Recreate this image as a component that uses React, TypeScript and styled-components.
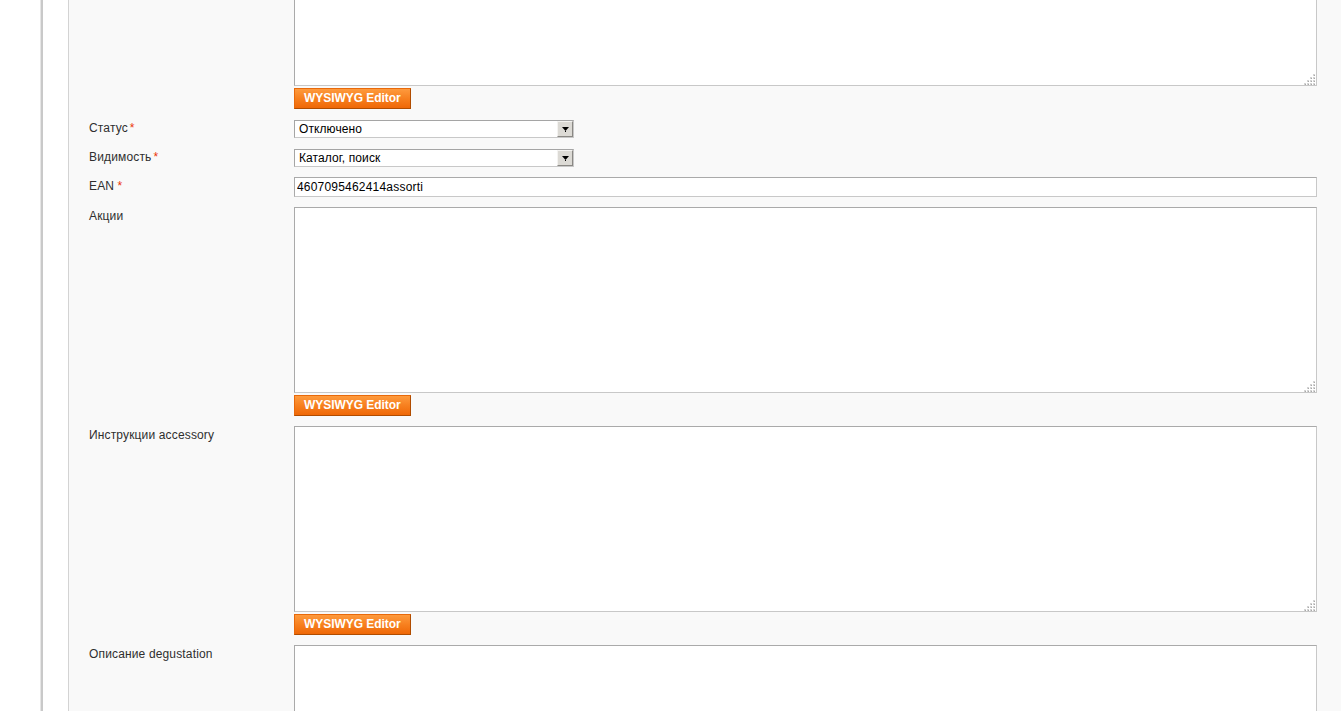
import styled, { createGlobalStyle } from 'styled-components'

const GlobalStyle = createGlobalStyle`
  html, body {
    margin: 0;
    padding: 0;
    background: #fff;
    overflow: hidden;
  }
  body {
    font: 12px/15px Arial, 'Liberation Sans', Helvetica, sans-serif;
    color: #2f2f2f;
  }
`

const Page = styled.div`
  display: flex;
  width: 1341px;
  height: 711px;
  overflow: hidden;
  background: #fff;
`

// edge of the side column on the left
const SideEdge = styled.div`
  width: 40px;
  flex: none;
  border-right: 1px solid #e6e6e6;
`

const SideRule = styled.div`
  width: 2px;
  flex: none;
  background: #c9c9c9;
`

const Gutter = styled.div`
  width: 25px;
  flex: none;
`

const Fieldset = styled.div`
  flex: 1;
  min-width: 0;
  background: #f9f9f9;
  border-left: 1px solid #d3d3d3;
  padding: 0 24px 0 20px;
`

// the first row is scrolled partly out of view
const FormList = styled.div`
  display: grid;
  grid-template-columns: 205px 1fr;
  row-gap: 10px;
  margin-top: -100px;
`

const Label = styled.div`
  padding-top: 2px;
  color: #2f2f2f;
  letter-spacing: 0.15px;
`

const Req = styled.span<{ $gap?: number }>`
  color: #eb340a;
  margin-left: ${({ $gap }) => $gap ?? 2}px;
`

const Value = styled.div`
  display: flex;
  flex-direction: column;
  align-items: flex-start;
`

const AreaWrap = styled.div`
  position: relative;
  width: 100%;
`

const TextArea = styled.textarea`
  display: block;
  box-sizing: border-box;
  width: 100%;
  height: 186px;
  margin: 0;
  padding: 2px;
  border: 1px solid;
  border-color: #aaa #c8c8c8 #c8c8c8 #aaa;
  background: #fff;
  font: 12px Arial, 'Liberation Sans', sans-serif;
  resize: none;
  outline: none;
`

const Grip = styled.svg`
  position: absolute;
  right: 2px;
  bottom: 1px;
  pointer-events: none;
`

const WysiwygButton = styled.button`
  box-sizing: border-box;
  margin-top: 2px;
  height: 21px;
  padding: 0 9px 1px;
  border: 1px solid;
  border-color: #e8690a #b04c00 #b04c00 #e8690a;
  background: linear-gradient(#fe9a3d 0%, #f7801f 50%, #ef6807 100%);
  color: #fff;
  font: bold 12px Arial, 'Liberation Sans', sans-serif;
  letter-spacing: -0.05px;
  white-space: nowrap;
  cursor: pointer;
`

const SelectBox = styled.div<{ $width: number }>`
  box-sizing: border-box;
  display: flex;
  align-items: stretch;
  width: ${({ $width }) => $width}px;
  height: 18px;
  margin-top: 1px;
  border: 1px solid;
  border-color: #a5a5a5 #c8c8c8 #c8c8c8 #a5a5a5;
  background: #fff;
`

const SelectText = styled.div`
  flex: 1;
  padding-left: 4px;
  line-height: 16px;
  color: #000;
  letter-spacing: 0.1px;
  white-space: nowrap;
  overflow: hidden;
`

const ArrowButton = styled.div`
  box-sizing: border-box;
  width: 16px;
  flex: none;
  display: flex;
  align-items: center;
  justify-content: center;
  background: #dcdad5;
  border: 1px solid;
  border-color: #f4f3f1 #8a8884 #8a8884 #f4f3f1;
`

const TextInput = styled.input`
  box-sizing: border-box;
  display: block;
  width: 100%;
  height: 20px;
  margin: 0;
  padding: 0 2px;
  border: 1px solid;
  border-color: #aaa #c8c8c8 #c8c8c8 #aaa;
  background: #fff;
  color: #000;
  font: 12px Arial, 'Liberation Sans', sans-serif;
  letter-spacing: 0.2px;
  outline: none;
`

const DownArrow = () => (
  <svg width="7" height="5" viewBox="0 0 7 5">
    <polygon points="0,0 7,0 3.5,4" fill="#000" />
    <rect x="3" y="4" width="1" height="1" fill="#000" />
  </svg>
)

// dotted resize grip in the corner of each textarea
const gripDots: [number, number][] = []
for (let r = 0; r < 4; r++) {
  for (let c = 3 - r; c < 4; c++) gripDots.push([c * 3, r * 3])
}

const TextBlock = () => (
  <AreaWrap>
    <TextArea />
    <Grip width="11" height="11" viewBox="0 0 11 11">
      {gripDots.map(([x, y]) => (
        <g key={`${x}-${y}`}>
          <rect x={x} y={y} width="2" height="2" fill="#d4d4d4" />
          <rect x={x + 1} y={y + 1} width="1" height="1" fill="#a8a8a8" />
        </g>
      ))}
    </Grip>
  </AreaWrap>
)

const Select = ({ value, width = 280 }: { value: string; width?: number }) => (
  <SelectBox $width={width}>
    <SelectText>{value}</SelectText>
    <ArrowButton>
      <DownArrow />
    </ArrowButton>
  </SelectBox>
)

const Editor = () => <WysiwygButton type="button">WYSIWYG Editor</WysiwygButton>

const App = () => {
  return (
    <>
      <GlobalStyle />
      <Page>
        <SideEdge />
        <SideRule />
        <Gutter />
        <Fieldset>
          <FormList>
            <Label />
            <Value>
              <TextBlock />
              <Editor />
            </Value>

            <Label>
              Статус<Req>*</Req>
            </Label>
            <Value>
              <Select value="Отключено" />
            </Value>

            <Label>
              Видимость<Req>*</Req>
            </Label>
            <Value>
              <Select value="Каталог, поиск" />
            </Value>

            <Label>
              EAN <Req $gap={0}>*</Req>
            </Label>
            <Value>
              <TextInput defaultValue="4607095462414assorti" />
            </Value>

            <Label>Акции</Label>
            <Value>
              <TextBlock />
              <Editor />
            </Value>

            <Label>Инструкции accessory</Label>
            <Value>
              <TextBlock />
              <Editor />
            </Value>

            <Label>Описание degustation</Label>
            <Value>
              <TextBlock />
            </Value>
          </FormList>
        </Fieldset>
      </Page>
    </>
  )
}

export default App
